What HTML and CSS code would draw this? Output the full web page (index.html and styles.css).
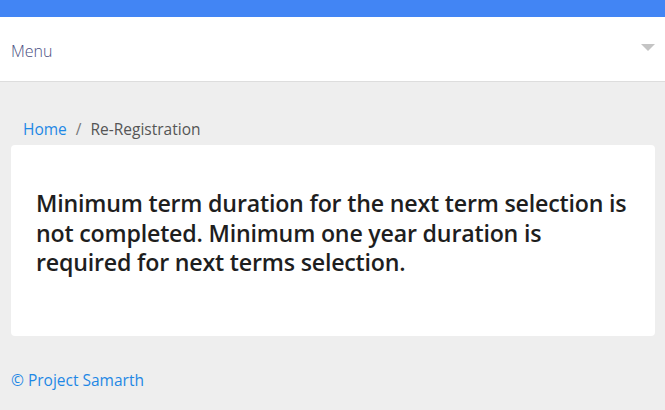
FILE: index.html
```html
<!DOCTYPE html>
<html lang="en">
<head>
<meta charset="utf-8">
<title>Re-Registration</title>
<link rel="stylesheet" href="styles.css">
</head>
<body>
<div class="topbar"></div>
<header class="header">
  <span class="menu-label">Menu</span>
  <span class="caret"></span>
</header>
<main class="content">
  <nav class="breadcrumb">
    <a class="crumb-link" href="#">Home</a>
    <span class="crumb-sep">/</span>
    <span class="crumb-current">Re-Registration</span>
  </nav>
  <section class="card">
    <h4 class="message">Minimum term duration for the next term selection is not completed. Minimum one year duration is required for next terms selection.</h4>
  </section>
  <footer class="footer">© Project Samarth</footer>
</main>
</body>
</html>
```
FILE: styles.css
```css
html, body {
  margin: 0;
  padding: 0;
}
body {
  background: #eeeeee;
  font-family: "Open Sans", "Noto Sans", sans-serif;
  width: 665px;
  height: 410px;
  overflow: hidden;
}
.topbar {
  height: 17px;
  background: #4285f4;
}
.header {
  height: 64px;
  background: #ffffff;
  border-bottom: 1px solid #dddddd;
  display: flex;
  align-items: center;
  justify-content: space-between;
  padding: 0 10px 0 11px;
}
.menu-label {
  font-size: 16px;
  font-weight: 300;
  color: #484e80;
  margin-top: 3px;
}
.caret {
  width: 0;
  height: 0;
  border-left: 7px solid transparent;
  border-right: 7px solid transparent;
  border-top: 7px solid #c4c4c4;
  margin-top: -3px;
}
.content {
  padding: 0 10px 0 11px;
}
.breadcrumb {
  display: flex;
  align-items: center;
  gap: 9px;
  padding: 32px 0 0 12px;
  height: 30px;
  font-size: 15.5px;
}
.crumb-link {
  color: #1e88e5;
  text-decoration: none;
}
.crumb-sep {
  color: #777777;
}
.crumb-current {
  color: #555555;
}
.card {
  margin-top: 1px;
  background: #ffffff;
  border-radius: 4px;
  padding: 44px 25px 58px 25px;
}
.message {
  margin: 0;
  font-size: 23.2px;
  line-height: 29.5px;
  font-weight: 600;
  color: #1e1e1e;
  letter-spacing: -0.2px;
}
.footer {
  margin-top: 33px;
  font-size: 15.5px;
  color: #1e88e5;
}
```
